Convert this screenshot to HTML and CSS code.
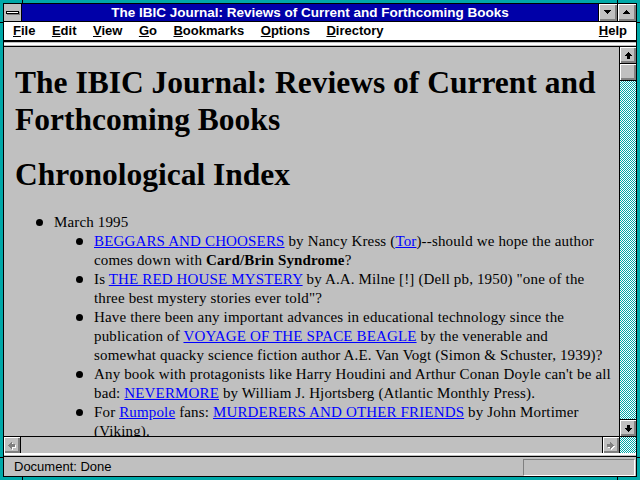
FILE: index.html
```html
<!DOCTYPE html>
<html lang="en">
<head>
    <meta charset="UTF-8">
    <title>The IBIC Journal: Reviews of Current and Forthcoming Books</title>
    <link rel="stylesheet" href="styles.css">
</head>
<body>
    <div class="window">
        <div class="frame">
            <div class="titlebar">
                <div class="sysmenu"><span></span></div>
                <div class="title">The IBIC Journal: Reviews of Current and Forthcoming Books</div>
                <div class="tbtn">
                    <svg width="7" height="4" viewBox="0 0 7 4"><polygon points="0,0 7,0 3.5,4" /></svg>
                </div>
                <div class="tbtn">
                    <svg width="7" height="4" viewBox="0 0 7 4"><polygon points="3.5,0 7,4 0,4" /></svg>
                </div>
            </div>

            <div class="menubar">
                <span><u>F</u>ile</span>
                <span><u>E</u>dit</span>
                <span><u>V</u>iew</span>
                <span><u>G</u>o</span>
                <span><u>B</u>ookmarks</span>
                <span><u>O</u>ptions</span>
                <span><u>D</u>irectory</span>
                <span class="help"><u>H</u>elp</span>
            </div>
            <div class="toolsep"></div>

            <div class="viewport">
                <div class="page">
                    <h1>The IBIC Journal: Reviews of Current and Forthcoming Books</h1>
                    <h2>Chronological Index</h2>
                    <ul class="months">
                        <li>March 1995
                            <ul>
                                <li><a href="#">BEGGARS AND CHOOSERS</a> by Nancy Kress (<a href="#">Tor</a>)--should we hope the author comes down with <b>Card/Brin Syndrome</b>?</li>
                                <li>Is <a href="#">THE RED HOUSE MYSTERY</a> by A.A. Milne [!] (Dell pb, 1950) "one of the three best mystery stories ever told"?</li>
                                <li>Have there been any important advances in educational technology since the publication of <a href="#">VOYAGE OF THE SPACE BEAGLE</a> by the venerable and somewhat quacky science fiction author A.E. Van Vogt (Simon &amp; Schuster, 1939)?</li>
                                <li>Any book with protagonists like Harry Houdini and Arthur Conan Doyle can't be all bad: <a href="#">NEVERMORE</a> by William J. Hjortsberg (Atlantic Monthly Press).</li>
                                <li>For <a href="#">Rumpole</a> fans: <a href="#">MURDERERS AND OTHER FRIENDS</a> by John Mortimer (Viking).</li>
                            </ul>
                        </li>
                    </ul>
                </div>
                <div class="vscroll">
                    <div class="sbtn up">
                        <svg width="7" height="7" viewBox="0 0 7 7"><polygon points="3.5,0 7,4 5,4 5,7 2,7 2,4 0,4" /></svg>
                    </div>
                    <div class="thumb"></div>
                    <div class="track"></div>
                    <div class="sbtn down">
                        <svg width="7" height="7" viewBox="0 0 7 7"><polygon points="2,0 5,0 5,3 7,3 3.5,7 0,3 2,3" /></svg>
                    </div>
                </div>
            </div>

            <div class="hscroll">
                <div class="sbtn left">
                    <svg width="8" height="7" viewBox="0 0 8 7"><polygon points="0,3.5 4,0 4,2 7,2 7,5 4,5 4,7" /></svg>
                </div>
                <div class="htrack"></div>
                <div class="sbtn right">
                    <svg width="8" height="7" viewBox="0 0 8 7"><polygon points="7,3.5 3,0 3,2 0,2 0,5 3,5 3,7" /></svg>
                </div>
                <div class="corner"></div>
            </div>
            <div class="statsep"></div>

            <div class="status">
                <span class="status-text">Document: Done</span>
                <div class="progress"></div>
            </div>
        </div>
    </div>
</body>
</html>
```

FILE: styles.css
```css
html, body {
    margin: 0;
    padding: 0;
}
body {
    width: 640px;
    height: 480px;
    overflow: hidden;
    font-family: "Liberation Sans", Arial, sans-serif;
}
.window {
    box-sizing: border-box;
    width: 640px;
    height: 480px;
    padding: 3px;
    /* resize notches in the frame */
    background:
        linear-gradient(#000, #000) 22px 0 / 1px 3px no-repeat,
        linear-gradient(#000, #000) 617px 0 / 1px 3px no-repeat,
        linear-gradient(#000, #000) 22px 477px / 1px 3px no-repeat,
        linear-gradient(#000, #000) 617px 477px / 1px 3px no-repeat,
        linear-gradient(#000, #000) 0 22px / 3px 1px no-repeat,
        linear-gradient(#000, #000) 0 457px / 3px 1px no-repeat,
        linear-gradient(#000, #000) 637px 22px / 3px 1px no-repeat,
        linear-gradient(#000, #000) 637px 457px / 3px 1px no-repeat,
        #00a8a8;
}
.frame {
    box-sizing: border-box;
    height: 100%;
    border: 1px solid #000;
    display: flex;
    flex-direction: column;
    background: #c0c0c0;
}

/* title bar */
.titlebar {
    box-sizing: border-box;
    height: 18px;
    border-bottom: 1px solid #000;
    display: flex;
    background: #0000a8;
}
.sysmenu {
    width: 17px;
    border-right: 1px solid #000;
    background: #c0c0c0;
    display: flex;
    align-items: center;
    justify-content: center;
}
.sysmenu span {
    width: 11px;
    height: 1px;
    background: #fff;
    border: 1px solid #000;
    box-shadow: 1px 1px 0 #808080;
}
.title {
    flex: 1;
    color: #fff;
    font-weight: bold;
    font-size: 13.5px;
    line-height: 17px;
    text-align: center;
    white-space: nowrap;
}
.tbtn {
    width: 18px;
    border-left: 1px solid #000;
    background: #c0c0c0;
    box-shadow: inset 1px 1px #fff, inset -2px -2px #808080;
    display: flex;
    align-items: center;
    justify-content: center;
}
svg {
    display: block;
    shape-rendering: crispEdges;
}
.tbtn svg {
    margin: -1px 0 0 -1px;
}

/* menu */
.menubar {
    height: 18px;
    background: #fff;
    border-bottom: 2px solid #000;
    display: flex;
    gap: 16.5px;
    padding: 0 9px;
    font-size: 13px;
    font-weight: bold;
    line-height: 18px;
}
.menubar .help {
    margin-left: auto;
}
.toolsep {
    height: 4px;
    border-bottom: 1px solid #000;
    background: linear-gradient(#c0c0c0 0 1px, #fff 1px 3px, #c0c0c0 3px);
}

/* document area */
.viewport {
    flex: 1;
    display: flex;
    min-height: 0;
}
.page {
    flex: 1;
    overflow: hidden;
    padding: 0 8px 0 11px;
    font-family: "Liberation Serif", "Times New Roman", serif;
    font-size: 15px;
    letter-spacing: 0.15px;
    line-height: 19px;
    color: #000;
}
.page h1, .page h2 {
    font-size: 31.5px;
    letter-spacing: 0;
    line-height: 37px;
    font-weight: bold;
}
.page h1 {
    margin: 17px 0 18px;
}
.page h2 {
    margin: 0 0 20px;
}
.page ul {
    list-style: none;
    margin: 0;
    padding-left: 40px;
}
.page ul.months {
    padding-left: 39px;
}
.page li::before {
    content: "";
    float: left;
    width: 7px;
    height: 7px;
    margin: 6px 0 0 -18px;
    border-radius: 50%;
    background: #000;
}
.page a {
    color: #0000ff;
}

/* scrollbars */
.track, .corner {
    background-color: #fff;
    background-image: repeating-conic-gradient(#00a8a8 0 25%, #fff 0 50%);
    background-size: 2px 2px;
}
.vscroll {
    width: 16px;
    border-left: 1px solid #000;
    display: flex;
    flex-direction: column;
}
.sbtn, .thumb {
    background: #c0c0c0;
    box-shadow: inset 1px 1px #fff, inset -2px -2px #808080;
    display: flex;
    align-items: center;
    justify-content: center;
}
.vscroll .sbtn, .thumb {
    height: 16px;
}
.up, .thumb {
    border-bottom: 1px solid #000;
}
.down {
    border-top: 1px solid #000;
}
.track {
    flex: 1;
}
.hscroll {
    height: 16px;
    border-top: 1px solid #000;
    display: flex;
}
.hscroll .sbtn {
    width: 16px;
}
.left {
    border-right: 1px solid #000;
}
.right {
    border-left: 1px solid #000;
}
.hscroll svg {
    fill: #808080;
    filter: drop-shadow(1px 1px 0 #fff);
}
.htrack {
    flex: 1;
    background: #c0c0c0;
}
.corner {
    width: 16px;
    border-left: 1px solid #000;
}
.statsep {
    height: 4px;
    background: linear-gradient(#fff 0 2px, #c0c0c0 2px 3px, #000 3px);
}

/* status */
.status {
    height: 19px;
    display: flex;
    align-items: flex-start;
    padding-left: 10px;
    font-size: 13px;
    line-height: 19px;
}
.progress {
    box-sizing: border-box;
    width: 112px;
    height: 17px;
    margin: 2px 1px 0 auto;
    border-top: 1px solid #808080;
    border-left: 1px solid #808080;
    border-bottom: 1px solid #fff;
    border-right: 1px solid #fff;
}
```
